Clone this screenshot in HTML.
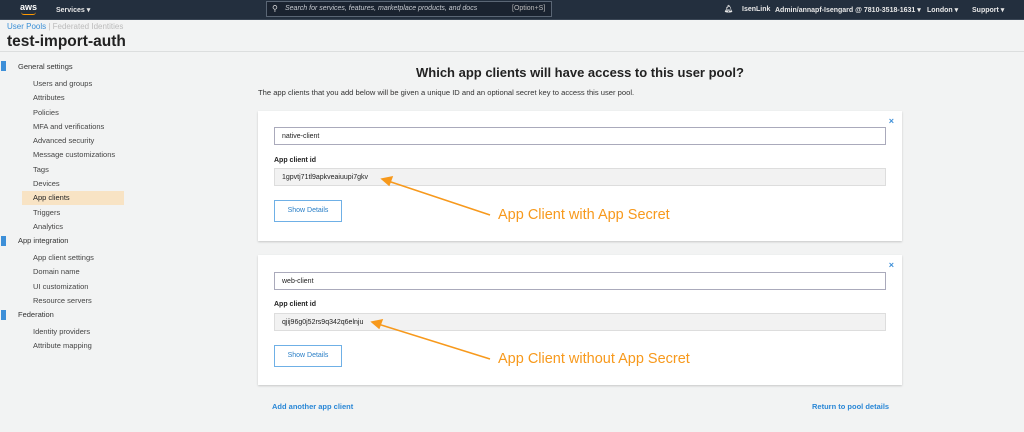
<!DOCTYPE html>
<html><head><style>
*{margin:0;padding:0;box-sizing:border-box}
body{width:1024px;height:432px;overflow:hidden;background:#f2f3f3;font-family:"Liberation Sans",sans-serif;position:relative;color:#333}
.a{position:absolute;white-space:nowrap}
.nav{left:0;top:0;width:1024px;height:20px;background:#232f3e;border-bottom:1px solid #3a4655}
.nt{color:#e8e8e8;font-size:7px;font-weight:bold}
.side{font-size:7.5px;color:#444}
.hd{font-size:7.5px;color:#333}
.bar{width:5px;height:10px;background:#3d8fd8;left:1px}
.card{left:258px;width:644px;height:130px;background:#fff;box-shadow:0 1px 2px rgba(0,0,0,.18)}
.inp{left:16px;width:612px;height:18px;border:1px solid #aab;background:#fff;font-size:7px;padding:5px 7px;color:#222}
.ro{left:16px;width:612px;height:18px;border:1px solid #ddd;background:#f2f2f2;font-size:7px;padding:5px 7px;color:#222}
.lbl{left:16px;font-size:7px;font-weight:bold;color:#222}
.btn{left:16px;width:68px;height:22px;border:1px solid #6fb0e6;background:#fff;font-size:7px;color:#2a7fc7;text-align:center;line-height:20px}
.x{right:8px;top:5px;color:#3d8fd8;font-size:9px;font-weight:bold}
.or{font-size:14.5px;color:#f7991c}
.lnk{color:#2a87d6;font-size:7.5px;font-weight:bold}
</style></head><body>
<div class="a nav"></div>
<div class="a" style="left:20px;top:2px;color:#fff;font-size:9px;font-weight:bold">aws</div>
<div class="a" style="left:21px;top:12px;width:15px;height:3px;border-bottom:1.5px solid #f90;border-radius:0 0 8px 8px"></div>
<div class="a nt" style="left:56px;top:6px">Services ▾</div>
<div class="a" style="left:266px;top:1px;width:286px;height:16px;border:1px solid #5a6675;background:#1a2330"></div>
<div class="a" style="left:272px;top:4px;color:#ddd;font-size:8px">⚲</div>
<div class="a" style="left:285px;top:5px;color:#c8ccd2;font-size:7px;font-style:italic">Search for services, features, marketplace products, and docs</div>
<div class="a" style="left:512px;top:5px;color:#bbb;font-size:7px">[Option+S]</div>
<div class="a nt" style="left:724px;top:5px">🔔︎</div>
<div class="a nt" style="left:742px;top:6px">IsenLink</div>
<div class="a nt" style="left:775px;top:6px">Admin/annapf-Isengard @ 7810-3518-1631 ▾</div>
<div class="a nt" style="left:927px;top:6px">London ▾</div>
<div class="a nt" style="left:972px;top:6px">Support ▾</div>
<div class="a" style="left:7px;top:22px;font-size:8px;color:#3a8fd6">User Pools<span style="color:#bbb"> | Federated Identities</span></div>
<div class="a" style="left:7px;top:33px;font-size:15.5px;font-weight:bold;color:#222">test-import-auth</div>
<div class="a" style="left:0;top:51px;width:1024px;height:1px;background:#dcdede"></div>
<div class="a bar" style="top:61px"></div><div class="a hd" style="left:18px;top:62px">General settings</div>
<div class="a" style="left:22px;top:191px;width:102px;height:14px;background:#f8e3c4"></div>
<div class="a side" style="left:33px;top:77px;line-height:14.3px">Users and groups<br>Attributes<br>Policies<br>MFA and verifications<br>Advanced security<br>Message customizations<br>Tags<br>Devices<br><span style="color:#222">App clients</span><br>Triggers<br>Analytics</div>
<div class="a bar" style="top:236px"></div><div class="a hd" style="left:18px;top:236px">App integration</div>
<div class="a side" style="left:33px;top:251px;line-height:14.3px">App client settings<br>Domain name<br>UI customization<br>Resource servers</div>
<div class="a bar" style="top:310px"></div><div class="a hd" style="left:18px;top:310px">Federation</div>
<div class="a side" style="left:33px;top:325px;line-height:14.3px">Identity providers<br>Attribute mapping</div>
<div class="a" style="left:258px;top:65px;width:644px;text-align:center;font-size:13px;font-weight:bold;color:#222">Which app clients will have access to this user pool?</div>
<div class="a" style="left:258px;top:88px;font-size:7.6px;color:#333">The app clients that you add below will be given a unique ID and an optional secret key to access this user pool.</div>
<div class="a card" style="top:111px">
<div class="a x">×</div>
<div class="a inp" style="top:16px">native-client</div>
<div class="a lbl" style="top:46px">App client id</div>
<div class="a ro" style="top:57px">1gpvtj71tl9apkveaiuupi7gkv</div>
<div class="a btn" style="top:89px">Show Details</div>
</div>
<div class="a card" style="top:255px">
<div class="a x">×</div>
<div class="a inp" style="top:17px">web-client</div>
<div class="a lbl" style="top:46px">App client id</div>
<div class="a ro" style="top:58px">qjij96g0j52rs9q342q6elnju</div>
<div class="a btn" style="top:90px">Show Details</div>
</div>
<svg class="a" style="left:0;top:0" width="1024" height="432"><g stroke="#f7991c" stroke-width="1.5" fill="#f7991c">
<line x1="490" y1="215" x2="388" y2="181"/><polygon points="382,179 392,177 389,185" />
<line x1="490" y1="359" x2="378" y2="324"/><polygon points="372,322 382,320 379,328" /></g></svg>
<div class="a or" style="left:498px;top:207px">App Client with App Secret</div>
<div class="a or" style="left:498px;top:351px">App Client without App Secret</div>
<div class="a lnk" style="left:272px;top:402px">Add another app client</div>
<div class="a lnk" style="left:812px;top:402px">Return to pool details</div>
</body></html>
